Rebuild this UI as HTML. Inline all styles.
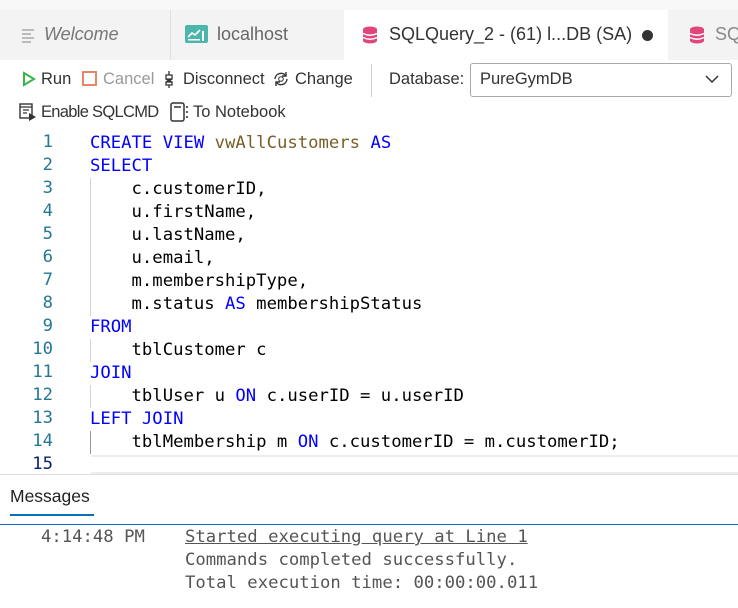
<!DOCTYPE html>
<html><head><meta charset="utf-8"><style>
*{margin:0;padding:0;box-sizing:border-box}
body{width:738px;height:608px;overflow:hidden;background:#fff;font-family:"Liberation Sans",sans-serif;position:relative;color:#333}
.abs{position:absolute}
.ui{font-family:"Liberation Sans",sans-serif;font-size:16.5px;white-space:nowrap}
.mono{font-family:"DejaVu Sans Mono","Liberation Mono",monospace;font-size:17.25px;white-space:pre}
.k{color:#0000ff}.f{color:#795e26}
.ln{position:absolute;left:0;width:53px;text-align:right;color:#237893;font-family:"DejaVu Sans Mono",monospace;font-size:17.25px}
.guide{position:absolute;left:90px;width:1px;background:#d3d3d3}
</style></head><body>
<div class="abs" style="left:0;top:0;width:738px;height:10px;background:#f8f8f8"></div>
<div class="abs" style="left:0;top:10px;width:738px;height:50px;background:#f3f3f3"></div>
<div class="abs" style="left:170px;top:10px;width:1px;height:50px;background:#e0e0e0"></div>
<div class="abs" style="left:344px;top:10px;width:324px;height:50px;background:#fff"></div>
<div class="abs" style="left:22px;top:29px;width:12px;height:12px">
<div style="height:2px;background:#bbb;margin-bottom:2px;width:12px"></div><div style="height:2px;background:#bbb;margin-bottom:2px;width:9px"></div><div style="height:2px;background:#bbb;margin-bottom:2px;width:12px"></div><div style="height:2px;background:#bbb;width:9px"></div></div>
<div class="abs ui" style="left:44px;top:24px;font-size:18px;font-style:italic;color:#777">Welcome</div>
<div class="abs" style="left:185px;top:25px;width:23px;height:18px;background:#4db6ac;border-radius:2px"></div>
<svg class="abs" style="left:185px;top:25px" width="23" height="18"><polyline points="3,12 7,8 10,10 15,5" stroke="#fff" stroke-width="1.6" fill="none"/><rect x="3" y="14" width="12" height="1.5" fill="#fff"/><rect x="17" y="6" width="2" height="10" fill="#fff"/></svg>
<div class="abs ui" style="left:217px;top:24px;font-size:18px;color:#666">localhost</div>
<svg class="abs" style="left:362px;top:26px" width="16" height="18"><ellipse cx="8" cy="3.5" rx="7" ry="3" fill="#e0457b"/><rect x="1" y="3.5" width="14" height="11" fill="#e0457b"/><ellipse cx="8" cy="14.5" rx="7" ry="3" fill="#e0457b"/><path d="M1 7.5 Q8 11 15 7.5 M1 11.5 Q8 15 15 11.5" stroke="#fff" stroke-width="1.5" fill="none"/></svg>
<div class="abs ui" style="left:389px;top:24px;font-size:18px;color:#333">SQLQuery_2 - (61) l...DB (SA)</div>
<div class="abs" style="left:642px;top:30px;width:11px;height:11px;border-radius:50%;background:#333"></div>
<svg class="abs" style="left:689px;top:26px" width="16" height="18"><ellipse cx="8" cy="3.5" rx="7" ry="3" fill="#e0457b"/><rect x="1" y="3.5" width="14" height="11" fill="#e0457b"/><ellipse cx="8" cy="14.5" rx="7" ry="3" fill="#e0457b"/><path d="M1 7.5 Q8 11 15 7.5 M1 11.5 Q8 15 15 11.5" stroke="#fff" stroke-width="1.5" fill="none"/></svg>
<div class="abs ui" style="left:715px;top:24px;font-size:18px;color:#888">SQ</div>
<svg class="abs" style="left:22px;top:71px" width="14" height="16"><path d="M2 2 L12 8 L2 14 Z" stroke="#3bb44a" stroke-width="2" fill="none"/></svg>
<div class="abs ui" style="left:41px;top:70px">Run</div>
<div class="abs" style="left:82px;top:71px;width:15px;height:15px;border:2px solid #e8866a"></div>
<div class="abs ui" style="left:103px;top:70px;color:#999">Cancel</div>
<svg class="abs" style="left:163px;top:70px" width="12" height="18"><path d="M6 1v4 M3 5h6v4H3z M3 9l6 3 M9 9l-6 3 M3 12h6v3H3z M6 15v3" stroke="#333" stroke-width="1.3" fill="none"/></svg>
<div class="abs ui" style="left:183px;top:70px">Disconnect</div>
<svg class="abs" style="left:272px;top:70px" width="18" height="18"><path d="M3 9a6 6 0 0 1 11-3 M15 9a6 6 0 0 1-11 3" stroke="#333" stroke-width="1.4" fill="none"/><path d="M14 2v4h-4 M4 16v-4h4" stroke="#333" stroke-width="1.4" fill="none"/><circle cx="9" cy="9" r="2.3" stroke="#333" fill="none"/></svg>
<div class="abs ui" style="left:295px;top:70px">Change</div>
<div class="abs" style="left:371px;top:64px;width:1px;height:33px;background:#ccc"></div>
<div class="abs ui" style="left:389px;top:70px">Database:</div>
<div class="abs" style="left:470px;top:63px;width:262px;height:34px;border:1px solid #aaa;border-radius:3px"></div>
<div class="abs ui" style="left:480px;top:70px">PureGymDB</div>
<svg class="abs" style="left:704px;top:74px" width="16" height="10"><path d="M2 2l6 6 6-6" stroke="#333" stroke-width="1.5" fill="none"/></svg>
<svg class="abs" style="left:19px;top:103px" width="18" height="18"><rect x="1" y="1" width="12" height="14" stroke="#333" stroke-width="1.4" fill="none"/><path d="M1 4h12 M4 7h6 M4 10h4" stroke="#333" stroke-width="1.3"/><path d="M10 10l7 4-7 4z" fill="#333"/></svg>
<div class="abs ui" style="left:41px;top:103px;letter-spacing:-0.7px">Enable SQLCMD</div>
<svg class="abs" style="left:170px;top:102px" width="20" height="20"><rect x="1" y="1" width="13" height="18" rx="2" stroke="#333" stroke-width="1.5" fill="none"/><path d="M4 5h7" stroke="#333" stroke-width="1.5"/><path d="M17 4v2 M17 9v2 M17 14v2" stroke="#333" stroke-width="1.6"/></svg>
<div class="abs ui" style="left:193px;top:103px">To Notebook</div>
<div class="guide" style="top:178px;height:138px"></div>
<div class="guide" style="top:339px;height:23px"></div>
<div class="guide" style="top:385px;height:23px"></div>
<div class="guide" style="top:431px;height:23px;background:#999"></div>
<div class="abs" style="left:91px;top:455px;width:647px;height:19px;border-top:2px solid #eee;border-bottom:2px solid #eee"></div>
<div class="abs" style="left:0;top:132px;width:738px">
<div style="position:relative;height:23px"><span class="ln">1</span></div>
<div style="position:relative;height:23px"><span class="ln">2</span></div>
<div style="position:relative;height:23px"><span class="ln">3</span></div>
<div style="position:relative;height:23px"><span class="ln">4</span></div>
<div style="position:relative;height:23px"><span class="ln">5</span></div>
<div style="position:relative;height:23px"><span class="ln">6</span></div>
<div style="position:relative;height:23px"><span class="ln">7</span></div>
<div style="position:relative;height:23px"><span class="ln">8</span></div>
<div style="position:relative;height:23px"><span class="ln">9</span></div>
<div style="position:relative;height:23px"><span class="ln">10</span></div>
<div style="position:relative;height:23px"><span class="ln">11</span></div>
<div style="position:relative;height:23px"><span class="ln">12</span></div>
<div style="position:relative;height:23px"><span class="ln">13</span></div>
<div style="position:relative;height:23px"><span class="ln">14</span></div>
<div style="position:relative;height:23px"><span class="ln" style="color:#0b216f">15</span></div>
</div>
<div class="abs mono" style="left:90px;top:132px;line-height:23px;color:#000"><span class="k">CREATE VIEW</span> <span class="f">vwAllCustomers</span> <span class="k">AS</span>
<span class="k">SELECT</span>
    c.customerID,
    u.firstName,
    u.lastName,
    u.email,
    m.membershipType,
    m.status <span class="k">AS</span> membershipStatus
<span class="k">FROM</span>
    tblCustomer c
<span class="k">JOIN</span>
    tblUser u <span class="k">ON</span> c.userID = u.userID
<span class="k">LEFT JOIN</span>
    tblMembership m <span class="k">ON</span> c.customerID = m.customerID;
</div>
<div class="abs" style="left:0;top:474px;width:738px;height:1px;background:#ddd"></div>
<div class="abs ui" style="left:10px;top:486px;font-size:17.5px;color:#222">Messages</div>
<div class="abs" style="left:10px;top:514px;width:84px;height:2px;background:#0a6fc2"></div>
<div class="abs" style="left:0;top:524px;width:738px;height:1px;background:#0a6fc2"></div>
<div class="abs mono" style="left:41px;top:526px;line-height:23px;color:#555">4:14:48 PM</div>
<div class="abs mono" style="left:185px;top:526px;line-height:23px;color:#555"><span style="text-decoration:underline">Started executing query at Line 1</span>
Commands completed successfully.
Total execution time: 00:00:00.011</div>
</body></html>
